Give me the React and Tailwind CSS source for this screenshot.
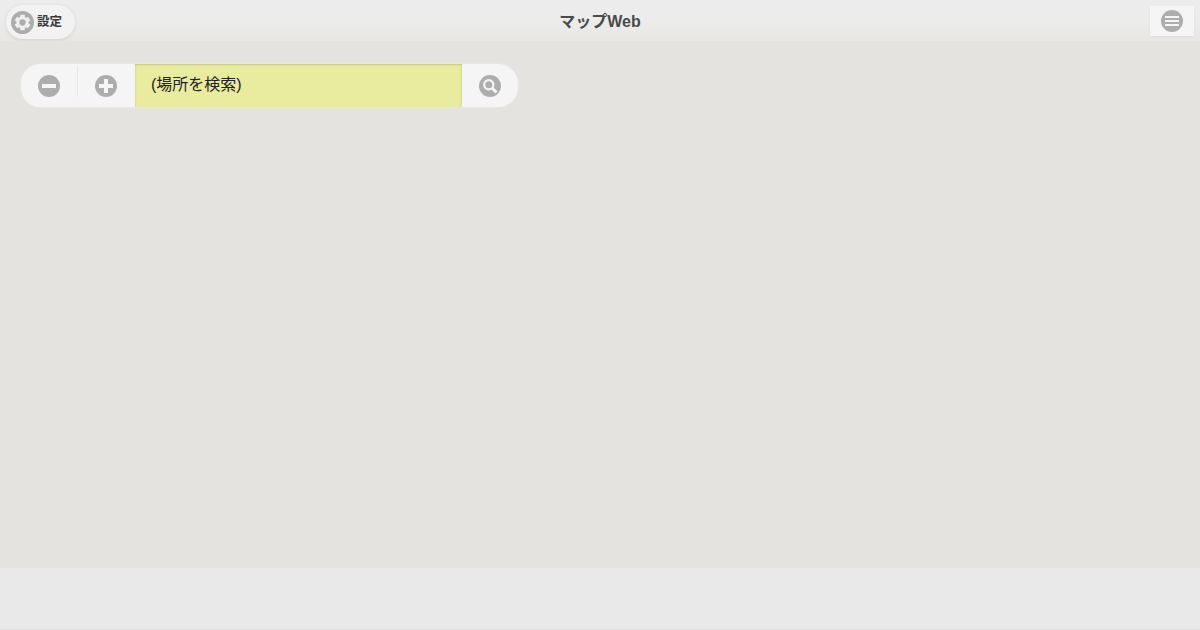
const cjk = "font-['Liberation_Sans','Noto_Sans_CJK_JP',sans-serif]"

function GearIcon() {
  const teeth = [0, 60, 120, 180, 240, 300]
  return (
    <svg width="23" height="23" viewBox="0 0 22 22">
      <circle cx="11" cy="11" r="11" fill="#adadad" />
      {teeth.map((deg) => (
        <rect key={deg} x="8.8" y="3.6" width="4.4" height="3.2" fill="#efefef" transform={`rotate(${deg} 11 11)`} />
      ))}
      <circle cx="11" cy="11" r="5.8" fill="#efefef" />
      <circle cx="11" cy="11" r="3" fill="#adadad" />
    </svg>
  )
}

function MinusIcon() {
  return (
    <svg width="22" height="22" viewBox="0 0 22 22">
      <circle cx="11" cy="11" r="11" fill="#adadad" />
      <rect x="4" y="9" width="14" height="4" fill="#f5f5f5" />
    </svg>
  )
}

function PlusIcon() {
  return (
    <svg width="22" height="22" viewBox="0 0 22 22">
      <circle cx="11" cy="11" r="11" fill="#adadad" />
      <rect x="4" y="9" width="14" height="4" fill="#f5f5f5" />
      <rect x="9" y="4" width="4" height="14" fill="#f5f5f5" />
    </svg>
  )
}

function SearchIcon() {
  return (
    <svg width="22" height="22" viewBox="0 0 22 22">
      <circle cx="11" cy="11" r="11" fill="#adadad" />
      <circle cx="9.8" cy="9.8" r="4.6" fill="none" stroke="#f5f5f5" strokeWidth="2.2" />
      <path d="M13 13l4.5 4.5" stroke="#f5f5f5" strokeWidth="3" />
    </svg>
  )
}

function HamburgerIcon() {
  return (
    <svg width="22" height="22" viewBox="0 0 22 22">
      <circle cx="11" cy="11" r="11" fill="#adadad" />
      <rect x="4" y="6" width="14" height="2" fill="#f5f5f5" />
      <rect x="4" y="10" width="14" height="2" fill="#f5f5f5" />
      <rect x="4" y="14" width="14" height="2" fill="#f5f5f5" />
    </svg>
  )
}

export default function App() {
  return (
    <div className={`flex flex-col h-[630px] w-[1200px] overflow-hidden bg-[#e9e9e9] ${cjk}`}>
      {/* Header */}
      <header className="grid grid-cols-[1fr_auto_1fr] items-center h-[41px] shrink-0 px-[6px] pt-[1px] bg-gradient-to-b from-[#ececec] via-[#ececec] to-[#e8e7e4]">
        <button className="flex items-center gap-[3px] h-[34px] w-[69px] mt-[2px] pl-[5px] rounded-full bg-[#f2f2f2] shadow-[0_1px_4px_rgba(0,0,0,0.1)]">
          <GearIcon />
          <span className="text-[12.5px] font-semibold text-[#3a3a3a]">設定</span>
        </button>
        <h1 className="mt-px text-[16px] font-bold text-[#4a4a4a]">マップWeb</h1>
        <button className="justify-self-end flex items-center justify-center h-[30px] w-[44px] bg-[#f5f5f5] shadow-[0_1px_3px_rgba(0,0,0,0.06)]">
          <HamburgerIcon />
        </button>
      </header>

      {/* Map */}
      <main className="relative flex-1 bg-[#e5e3df]">
        <div className="absolute left-[21px] top-[23px] flex h-[43px] w-[497px] rounded-[20px] overflow-hidden bg-[#f5f5f5] shadow-[0_0_2px_rgba(255,255,255,0.5)]">
          <button className="flex items-center justify-center w-[56px]">
            <MinusIcon />
          </button>
          <div className="w-px mt-[2px] mb-[10px] bg-[#e6e6e6]" />
          <button className="flex items-center justify-center w-[57px] pr-px">
            <PlusIcon />
          </button>
          <div className="flex items-center flex-1 pl-[16px] pb-[1px] bg-[#e9ec9e] shadow-[inset_0_2px_2px_-1px_rgba(0,0,0,0.15),inset_2px_0_2px_-1px_rgba(0,0,0,0.06),inset_-2px_0_2px_-1px_rgba(0,0,0,0.08)] text-[16px] text-[#222]">
            (場所を検索)
          </div>
          <button className="flex items-center justify-center w-[56px]">
            <SearchIcon />
          </button>
        </div>
      </main>

      {/* Footer */}
      <footer className="h-[62px] shrink-0 bg-[#e9e9e9] border-b border-[#dcdcdc]" />
    </div>
  )
}
